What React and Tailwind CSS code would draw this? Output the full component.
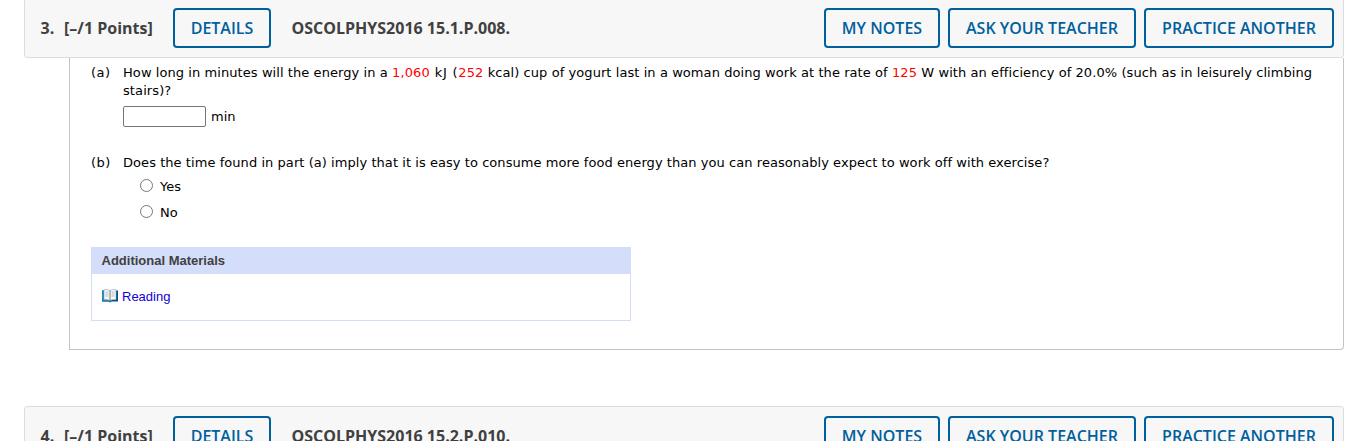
function HeaderButton({ children, className }) {
  return (
    <button
      type="button"
      className={`h-10 shrink-0 whitespace-nowrap rounded-[4px] border-2 border-[#00609c] bg-transparent text-center text-base font-semibold leading-9 text-[#00609c] ${className}`}
    >
      {children}
    </button>
  );
}

function QuestionHeader({ number, code }) {
  return (
    <header className="ml-6 flex h-[60px] w-[1320px] items-center rounded-[3px] border border-[#dcdcdc] bg-[#f7f7f7] pl-[15.5px] pr-[9px] font-['Open_Sans',sans-serif] text-base font-bold text-[#404040]">
      <span className="w-[23.5px] shrink-0">{number}.</span>
      <span className="w-[109px] shrink-0 whitespace-nowrap">[–/1 Points]</span>
      <HeaderButton className="w-[98px]">DETAILS</HeaderButton>
      <span className="ml-[20.5px] whitespace-nowrap">{code}</span>
      <div className="ml-auto flex gap-2">
        <HeaderButton className="w-[116px]">MY NOTES</HeaderButton>
        <HeaderButton className="w-[188px]">ASK YOUR TEACHER</HeaderButton>
        <HeaderButton className="w-[190px]">PRACTICE ANOTHER</HeaderButton>
      </div>
    </header>
  );
}

function Value({ children }) {
  return <span className="tracking-[0.12px] text-[#ff0000]">{children}</span>;
}

function Choice({ label }) {
  return (
    <label className="flex h-[26px] items-center">
      <input
        type="radio"
        name="answer"
        className="mb-[2px] size-[13px] appearance-none rounded-full border border-[#767676] bg-white"
      />
      <span className="ml-[7px] pt-[2px]">{label}</span>
    </label>
  );
}

function BookIcon() {
  return (
    <svg width="16" height="14" viewBox="0 0 16 14" className="mb-[3px] shrink-0">
      <path d="M0 1.5H2V10.5H14V1.5H16V12.5H9.5L8 13.5L6.5 12.5H0Z" fill="#0b5288" />
      <path d="M0 1.5H2V10.5H6L8 12V13L6.5 12.5H0Z" fill="#2482b5" />
      <path d="M2 .7Q5.5 0 8 1.5Q10.5 0 14 .7V10.5Q10.5 10 8 11.5Q5.5 10 2 10.5Z" fill="#f7f8f8" stroke="#83a9bd" strokeWidth=".6" />
      <path d="M8 1.5V11.5" stroke="#7a7a7a" strokeWidth="1" />
      <path d="M3.5 3H6.5M3.5 5H6.5M3.5 7H6.5M9.5 3H12.5M9.5 5H12.5M9.5 7H12.5" stroke="#a7aeb2" strokeWidth=".8" />
    </svg>
  );
}

export default function App() {
  return (
    <main className="h-[441px] w-[1359px] overflow-hidden bg-white">
      <div className="-mt-[2px]">
        <QuestionHeader number="3" code="OSCOLPHYS2016 15.1.P.008." />
        <section className="ml-[69px] h-[292px] w-[1275px] rounded-b-[4px] rounded-bl-none border border-t-0 border-[#c4c4c4] pl-[21px] pt-[6px] font-['DejaVu_Sans',sans-serif] text-[13px] leading-[18px] text-black">
          <div className="flex">
            <span className="w-[32px] shrink-0 tracking-[0.5px]">(a)</span>
            <div className="whitespace-nowrap">
              <p className="tracking-[0.073px]">
                How long in minutes will the energy in a <Value>1,060</Value>
                <span className="tracking-[0.75px]"> kJ (</span>
                <Value>252</Value> kcal) cup of yogurt last in a woman doing work at the rate of <Value>125</Value> W with an efficiency of 20.0% (such as in leisurely climbing
              </p>
              <p className="tracking-[0.1px]">stairs)?</p>
              <div className="mt-[6px] flex h-[21px] items-center">
                <input type="text" className="h-[21px] w-[83px] rounded-[2px] border border-[#767676] bg-white" />
                <span className="ml-[5px]">min</span>
              </div>
            </div>
          </div>
          <div className="mt-[27px] flex">
            <span className="w-[32px] shrink-0 tracking-[0.5px]">(b)</span>
            <div className="whitespace-nowrap">
              <p className="tracking-[0.058px]">Does the time found in part (a) imply that it is easy to consume more food energy than you can reasonably expect to work off with exercise?</p>
              <div className="ml-[17px] mt-[1px]">
                <Choice label="Yes" />
                <Choice label="No" />
              </div>
            </div>
          </div>
          <div className="mt-[22px] h-[74px] w-[540px] border border-[#d4ddfa] font-['Liberation_Sans',Arial,sans-serif]">
            <h3 className="h-[26px] bg-[#d4ddfa] pl-[9.5px] text-[13px] font-bold leading-[26px] text-[#404040]">Additional Materials</h3>
            <div className="flex items-center gap-1 pl-[10px] pt-[14px]">
              <BookIcon />
              <a className="text-[13px] text-[#1400d8]">Reading</a>
            </div>
          </div>
        </section>
        <div className="h-14" />
        <QuestionHeader number="4" code="OSCOLPHYS2016 15.2.P.010." />
      </div>
    </main>
  );
}
